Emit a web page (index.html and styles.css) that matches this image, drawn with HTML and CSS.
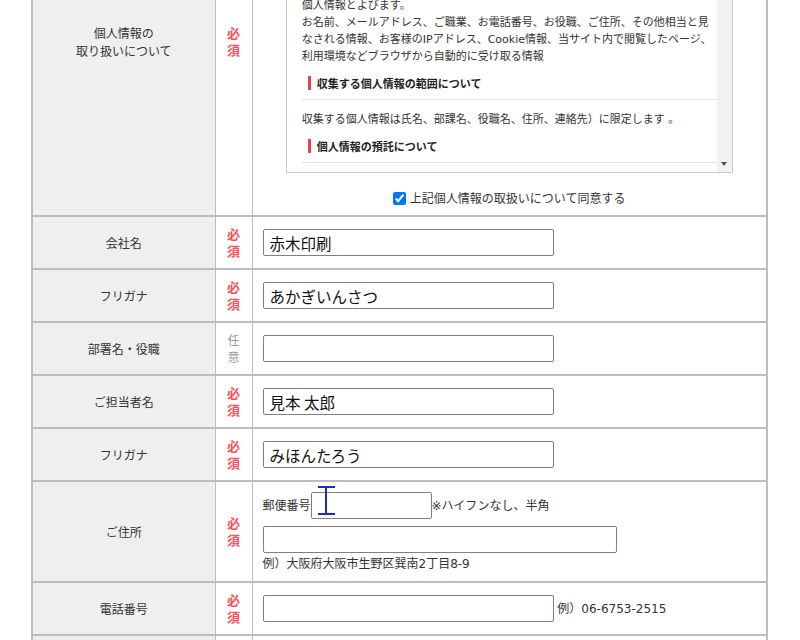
FILE: index.html
```html
<!DOCTYPE html>
<html lang="ja">
<head>
<meta charset="utf-8">
<title>お問い合わせフォーム</title>
<link rel="stylesheet" href="styles.css">
</head>
<body>
<table class="form">
  <colgroup>
    <col class="c-label">
    <col class="c-req">
    <col class="c-field">
  </colgroup>
  <tbody>
    <tr>
      <th>個人情報の<br>取り扱いについて</th>
      <td class="req"><span class="must">必<br>須</span></td>
      <td class="field privacy-cell">
        <div class="policy-frame">
          <div class="policy">
            <h4 class="ph first"><span>個人情報の定義について</span></h4>
            <p class="pp">当社では、お客様個人に関する情報であって、当該情報に含まれ<br>る氏名、生年月日その他の記述等により特定の個人を識別するこ<br>とができるもの、および以下の情報を含めたものを<br>個人情報とよびます。<br>お名前、メールアドレス、ご職業、お電話番号、お役職、ご住所、その他相当と見<br>なされる情報、お客様のIPアドレス、Cookie情報、当サイト内で閲覧したページ、<br>利用環境などブラウザから自動的に受け取る情報</p>
            <h4 class="ph"><span>収集する個人情報の範囲について</span></h4>
            <p class="pp">収集する個人情報は氏名、部課名、役職名、住所、連絡先）に限定します 。</p>
            <h4 class="ph"><span>個人情報の預託について</span></h4>
            <p class="pp">当社は、お客様の個人情報を業務委託先に預託する場合がありま<br>す。その場合は、適切な管理を行う委託先を選定いたします。</p>
            <h4 class="ph"><span>個人情報の利用目的について</span></h4>
            <p class="pp">お預かりした個人情報は、お問い合わせへの回答、資料の送付、<br>サービスのご案内のために利用いたします。</p>
          </div>
          <div class="sbar" aria-hidden="true">
            <span class="sbar-up"></span>
            <span class="sbar-thumb"></span>
            <span class="sbar-down"></span>
          </div>
        </div>
        <p class="agree"><label><input type="checkbox" checked> 上記個人情報の取扱いについて同意する</label></p>
      </td>
    </tr>
    <tr>
      <th>会社名</th>
      <td class="req"><span class="must">必<br>須</span></td>
      <td class="field"><input class="txt w-m" type="text" value="赤木印刷"></td>
    </tr>
    <tr>
      <th>フリガナ</th>
      <td class="req"><span class="must">必<br>須</span></td>
      <td class="field"><input class="txt w-m" type="text" value="あかぎいんさつ"></td>
    </tr>
    <tr>
      <th>部署名・役職</th>
      <td class="req"><span class="opt">任<br>意</span></td>
      <td class="field"><input class="txt w-m" type="text" value=""></td>
    </tr>
    <tr>
      <th>ご担当者名</th>
      <td class="req"><span class="must">必<br>須</span></td>
      <td class="field"><input class="txt w-m" type="text" value="見本 太郎"></td>
    </tr>
    <tr>
      <th>フリガナ</th>
      <td class="req"><span class="must">必<br>須</span></td>
      <td class="field"><input class="txt w-m" type="text" value="みほんたろう"></td>
    </tr>
    <tr>
      <th>ご住所</th>
      <td class="req"><span class="must">必<br>須</span></td>
      <td class="field addr-cell">
        <div class="zip-line">
          <span class="small">郵便番号</span>
          <span class="zip-wrap">
            <input class="txt w-zip" type="text" value="">
            <span class="ibeam"><span class="ib-top"></span><span class="ib-stem"></span><span class="ib-bot"></span></span>
          </span>
          <span class="small">※ハイフンなし、半角</span>
        </div>
        <input class="txt w-l" type="text" value="">
        <p class="example">例）大阪府大阪市生野区巽南2丁目8-9</p>
      </td>
    </tr>
    <tr>
      <th>電話番号</th>
      <td class="req"><span class="must">必<br>須</span></td>
      <td class="field"><input class="txt w-m" type="text" value=""> <span class="small">例）06-6753-2515</span></td>
    </tr>
    <tr>
      <th>メールアドレス</th>
      <td class="req"><span class="must">必<br>須</span></td>
      <td class="field"><input class="txt w-m" type="text" value=""></td>
    </tr>
  </tbody>
</table>
</body>
</html>
```
FILE: styles.css
```css
html, body {
  margin: 0;
  padding: 0;
  background: #fff;
}
body {
  font-family: "DejaVu Sans", "Noto Sans CJK JP", sans-serif;
  color: #333;
  overflow: hidden;
}

.form {
  width: 737px;
  margin: -133px 0 0 31px;
  border-collapse: collapse;
  table-layout: fixed;
  border-left: 2px solid #bdbdbd;
  border-right: 2px solid #bdbdbd;
}
.c-label { width: 183px; }
.c-req { width: 37px; }

.form th,
.form td {
  border-top: 2px solid #bdbdbd;
  border-bottom: 2px solid #bdbdbd;
  border-left: 1px solid #bdbdbd;
  border-right: 1px solid #bdbdbd;
  vertical-align: middle;
}

.form th {
  background: #efefef;
  font-family: "Noto Sans CJK JP", sans-serif;
  font-weight: normal;
  font-size: 12px;
  line-height: 18px;
  color: #333;
  text-align: center;
  padding: 0 8px;
}

.req {
  text-align: center;
  padding: 0;
  font-family: "Noto Sans CJK JP", sans-serif;
}
.must {
  display: inline-block;
  color: #ff4f5a;
  font-weight: bold;
  font-size: 13px;
  line-height: 17px;
}
.opt {
  display: inline-block;
  color: #9a9a9a;
  font-size: 12px;
  line-height: 17px;
}

.field {
  padding: 12px 10px;
  font-size: 12px;
  line-height: 16px;
}

.privacy-cell {
  padding: 12px 8px 7px;
}

.policy-frame {
  position: relative;
  box-sizing: border-box;
  width: 447px;
  height: 292px;
  margin: 0 auto;
  border: 1px solid #c9c9c9;
}
.policy {
  box-sizing: border-box;
  height: 100%;
  padding: 23px 15px 10px 15px;
  overflow: hidden;
  font-size: 11px;
  color: #333;
}
.pp {
  margin: 11px 0 0;
  line-height: 17px;
  white-space: nowrap;
}
.ph {
  margin: 5px 0 0;
  padding: 2px 0 9px;
  line-height: 18px;
  font-family: "Noto Sans CJK JP", sans-serif;
  font-size: 11px;
  font-weight: bold;
  color: #222;
  border-bottom: 1px solid #e3e3e3;
}
.ph.first { margin-top: 0; }
.ph span {
  display: inline-block;
  vertical-align: middle;
  margin-left: 6px;
  padding-left: 6px;
  line-height: 14px;
  border-left: 3px solid #e0464f;
}

.sbar {
  position: absolute;
  top: 0;
  right: 0;
  bottom: 0;
  width: 15px;
  background: #f1f1f1;
}
.sbar-up,
.sbar-down {
  position: absolute;
  left: 4px;
  width: 0;
  height: 0;
  border-left: 3.5px solid transparent;
  border-right: 3.5px solid transparent;
}
.sbar-up {
  top: 6px;
  border-bottom: 4px solid #505050;
}
.sbar-down {
  bottom: 6px;
  border-top: 4px solid #505050;
}
.sbar-thumb {
  position: absolute;
  top: 17px;
  left: 2px;
  width: 11px;
  height: 70px;
  border-radius: 2px;
  background: #c1c1c1;
}

.agree {
  margin: 15px 0 0;
  line-height: 20px;
  font-family: "Noto Sans CJK JP", sans-serif;
  font-size: 12px;
  text-align: center;
  color: #333;
}
.agree input {
  width: 13px;
  height: 13px;
  margin: 0 1px 0 0;
  vertical-align: -2px;
}

.txt {
  box-sizing: border-box;
  height: 27px;
  margin: 0;
  padding: 0 6px;
  border: 1px solid #808080;
  border-radius: 2px;
  font-family: "Noto Sans CJK JP", sans-serif;
  font-size: 15.5px;
  color: #111;
  background: #fff;
  vertical-align: middle;
}
.w-m { width: 291px; }
.w-l { width: 354px; display: block; }
.w-zip { width: 121px; }

.small {
  font-size: 12px;
  color: #333;
  vertical-align: middle;
}

.addr-cell {
  padding: 10px 10px 9px;
}
.zip-line {
  display: flex;
  align-items: center;
  height: 27px;
  margin-bottom: 7px;
}
.zip-wrap {
  position: relative;
  display: block;
  height: 27px;
}
.example {
  margin: 3px 0 0;
  font-size: 12px;
  line-height: 16px;
  color: #333;
}

.ibeam {
  position: absolute;
  left: 7px;
  top: -6px;
  width: 17px;
  height: 29px;
}
.ibeam span {
  position: absolute;
  background: #1f2bc4;
}
.ib-top { left: 0; top: 0; width: 17px; height: 2px; }
.ib-bot { left: 0; bottom: 0; width: 17px; height: 2px; }
.ib-stem { left: 7px; top: 0; width: 2px; height: 29px; }
```
